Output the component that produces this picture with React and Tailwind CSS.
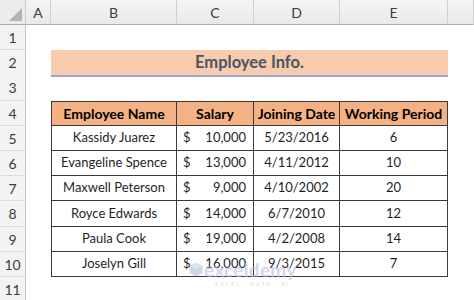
import React from "react";

const cols = ["A", "B", "C", "D", "E", ""];

const people = [
  { name: "Kassidy Juarez", salary: "10,000", date: "5/23/2016", period: "6" },
  { name: "Evangeline Spence", salary: "13,000", date: "4/11/2012", period: "10" },
  { name: "Maxwell Peterson", salary: "9,000", date: "4/10/2002", period: "20" },
  { name: "Royce Edwards", salary: "14,000", date: "6/7/2010", period: "12" },
  { name: "Paula Cook", salary: "19,000", date: "4/2/2008", period: "14" },
  { name: "Joselyn Gill", salary: "16,000", date: "9/3/2015", period: "7" },
];

const grid = "grid grid-cols-[26px_25px_126px_77px_86px_108px_1fr]";

const RowNum = ({ n }) => (
  <div className="flex items-center justify-center bg-[#f3f3f3] border-r border-b border-r-[#c6c6c6] border-b-[#dadada] text-[14px] text-[#3c3c3c]">
    {n}
  </div>
);

const Row = ({ n, h = "h-[25px]", children }) => (
  <div className={`${grid} ${h}`}>
    <RowNum n={n} />
    <div />
    {children}
    <div />
  </div>
);

const Watermark = () => (
  <div className="absolute left-[189px] top-[260px] flex flex-col pointer-events-none opacity-60">
    <div className="flex items-center gap-[1px]">
      <svg width="14" height="15" viewBox="0 0 14 15">
        <path d="M7 0.5 L13.5 4 L13.5 11 L7 14.5 L0.5 11 L0.5 4 Z" fill="#aebbdc" />
        <path d="M7 0.5 L13.5 4 L7 7.5 L0.5 4 Z" fill="#c8d1e8" />
      </svg>
      <span className="text-[19px] font-bold leading-none text-[#b4c0de] tracking-[0.3px]">exceldemy</span>
    </div>
    <span className="ml-[26px] mt-[2px] text-[6px] leading-none tracking-[1.6px] text-[#c4c9d6]">EXCEL · DATA · BI</span>
  </div>
);

export default function App() {
  return (
    <div className="relative w-[474px] h-[300px] overflow-hidden bg-white font-['Lato','Carlito','Liberation_Sans',sans-serif] text-[#1f1f1f]">
      {/* column headers */}
      <div className={`${grid} h-[25px]`}>
        <div className="relative bg-[#ececec] border-r border-b border-r-[#c6c6c6] border-b-[#ababab]">
          <svg className="absolute right-[3px] bottom-[3px]" width="13" height="13" viewBox="0 0 13 13">
            <path d="M13 0 L13 13 L0 13 Z" fill="#b4b4b4" />
          </svg>
        </div>
        {cols.map((c, i) => (
          <div
            key={i}
            className="flex items-center justify-center bg-gradient-to-b from-[#f4f4f4] to-[#e9e9e9] border-r border-b border-r-[#cfcfcf] border-b-[#ababab] text-[14px] text-[#3c3c3c]"
          >
            {c}
          </div>
        ))}
      </div>

      <Row n={1} />
      <Row n={2}>
        <div className="col-span-4 flex items-center justify-center bg-[#f8cbad] border-b-2 border-[#98a6cf] text-[16.5px] font-bold text-[#4a5568]">
          Employee Info.
        </div>
      </Row>
      <Row n={3} h="h-[26px]" />
      <Row n={4}>
        <div className="flex items-center justify-center bg-[#f4b183] border border-[#3a3a3a] text-[14px] font-bold text-black">
          Employee Name
        </div>
        <div className="flex items-center justify-center bg-[#f4b183] border-y border-r border-[#3a3a3a] text-[14px] font-bold text-black">
          Salary
        </div>
        <div className="flex items-center justify-center bg-[#f4b183] border-y border-r border-[#3a3a3a] text-[14px] font-bold text-black">
          Joining Date
        </div>
        <div className="flex items-center justify-center bg-[#f4b183] border-y border-r border-[#3a3a3a] text-[14px] font-bold text-black">
          Working Period
        </div>
      </Row>
      {people.map((p, i) => (
        <Row key={p.name} n={i + 5} h={i === 3 ? "h-[26px]" : "h-[25px]"}>
          <div className="flex items-center justify-center border-x border-b border-[#3a3a3a] text-[13px]">
            {p.name}
          </div>
          <div className="flex items-center justify-between pl-[6px] pr-[7px] border-r border-b border-[#3a3a3a] text-[13px]">
            <span>$</span>
            <span>{p.salary}</span>
          </div>
          <div className="flex items-center justify-center border-r border-b border-[#3a3a3a] text-[13px]">
            {p.date}
          </div>
          <div className="flex items-center justify-center border-r border-b border-[#3a3a3a] text-[13px]">
            {p.period}
          </div>
        </Row>
      ))}
      <Row n={11} />

      <Watermark />
    </div>
  );
}
